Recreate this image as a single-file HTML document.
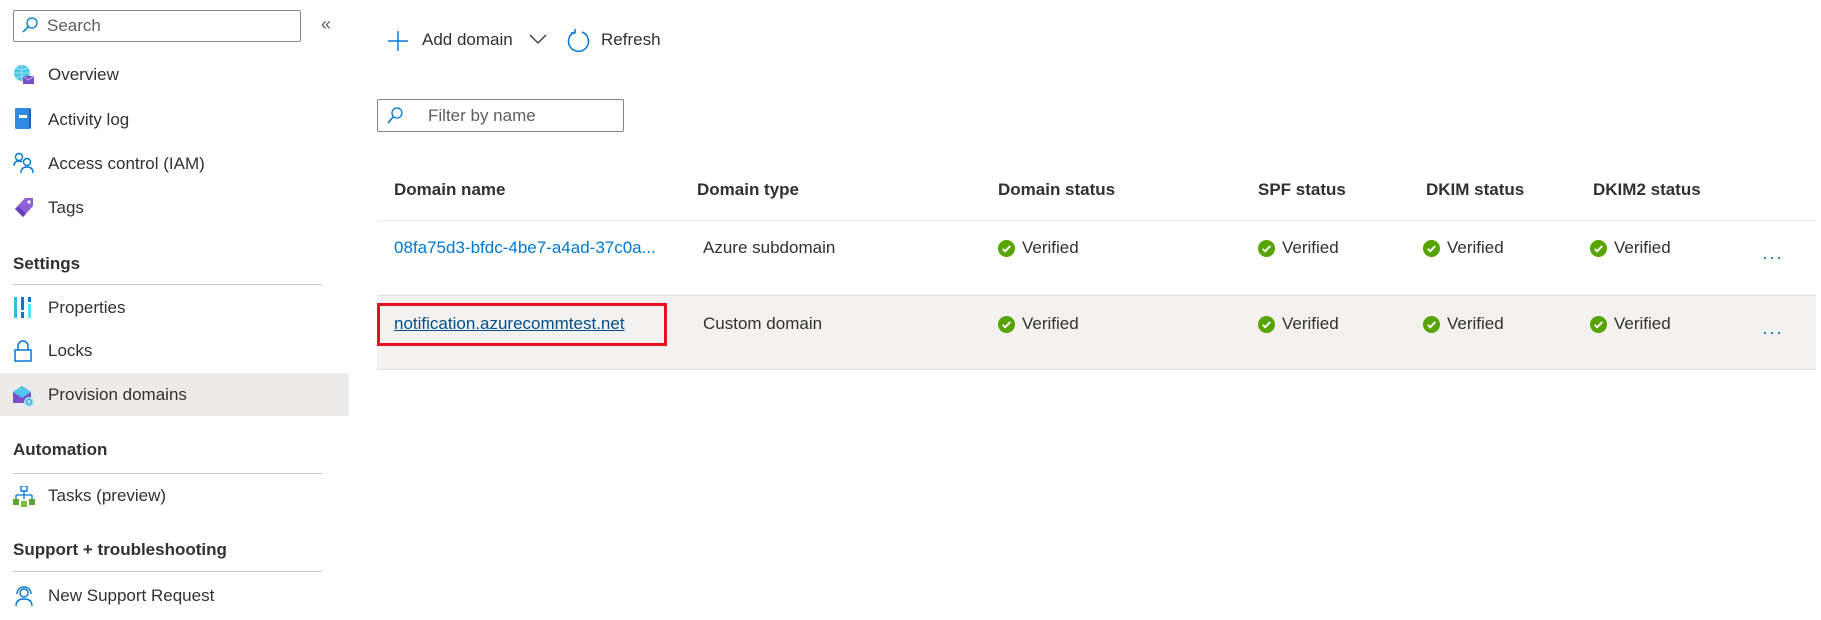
<!DOCTYPE html>
<html><head><meta charset="utf-8"><style>
*{margin:0;padding:0;box-sizing:border-box}
body{width:1821px;height:620px;background:#fff;font-family:"Liberation Sans",sans-serif;color:#323130;position:relative;overflow:hidden}
.a{position:absolute;white-space:nowrap}
.t{font-size:17px;line-height:20px}
.h{font-size:17px;font-weight:bold;color:#323130;line-height:20px}
.line{position:absolute;height:1px;background:#c8c6c4}
.v{position:absolute;font-size:17px;line-height:20px;color:#323130}
.v svg{position:absolute;left:-24px;top:2px}
.dots{position:absolute;color:#0078d4;font-size:18px;letter-spacing:1px}
</style></head><body>
<!-- sidebar -->
<div class="a" style="left:13px;top:10px;width:288px;height:32px;border:1px solid #8a8886;border-radius:2px"></div>
<svg class="a" style="left:21px;top:16px" width="18" height="18" viewBox="0 0 18 18"><circle cx="11" cy="7" r="5" fill="none" stroke="#0078d4" stroke-width="1.3"/><path d="M7.5 10.5L2 16" stroke="#0078d4" stroke-width="1.5"/></svg>
<div class="a t" style="left:47px;top:16px;color:#605e5c">Search</div>
<div class="a" style="left:321px;top:14px;font-size:18px;color:#605e5c">«</div>

<svg class="a" style="left:13px;top:64px" width="22" height="22" viewBox="0 0 22 22"><circle cx="9" cy="9" r="8" fill="#50c7e8"/><path d="M1 9h16M9 1v16M3 4q6 3 12 0M3 14q6-3 12 0" stroke="#9ee3f5" stroke-width="1" fill="none"/><rect x="10" y="12" width="11" height="8" fill="#7b4fc9"/><path d="M10 12l5.5 4 5.5-4" stroke="#c9b5f0" fill="none"/></svg>
<div class="a t" style="left:48px;top:65px">Overview</div>
<svg class="a" style="left:15px;top:108px" width="18" height="22" viewBox="0 0 18 22"><rect x="0" y="0" width="16" height="21" rx="1.5" fill="#2f8ae0"/><rect x="14" y="1" width="2" height="19" fill="#1d63b3"/><rect x="4" y="7" width="8" height="3" fill="#fff"/></svg>
<div class="a t" style="left:48px;top:110px">Activity log</div>
<svg class="a" style="left:13px;top:152px" width="22" height="22" viewBox="0 0 22 22" fill="none" stroke="#0078d4" stroke-width="1.4"><circle cx="6" cy="5" r="3.5"/><path d="M1 14q0-5 5-5q2 0 3 1"/><circle cx="14" cy="10" r="3.5"/><path d="M8 21q0-6 6-6t6 6"/></svg>
<div class="a t" style="left:48px;top:154px">Access control (IAM)</div>
<svg class="a" style="left:13px;top:197px" width="22" height="22" viewBox="0 0 22 22"><path d="M12 1h8v8L10 20 2 12z" fill="#8b5fd6"/><path d="M2 12l8 8 3-3-8-8z" fill="#6b3fbf"/><circle cx="16" cy="5" r="1.6" fill="#fff"/></svg>
<div class="a t" style="left:48px;top:198px">Tags</div>

<div class="a h" style="left:13px;top:254px">Settings</div>
<div class="line" style="left:13px;top:284px;width:309px"></div>
<svg class="a" style="left:14px;top:297px" width="20" height="22" viewBox="0 0 20 22"><rect x="0" y="0" width="3" height="21" fill="#32bedd"/><rect x="7" y="0" width="3" height="13" fill="#0078d4"/><rect x="7" y="15" width="3" height="6" fill="#0078d4"/><rect x="14" y="0" width="3" height="5" fill="#0078d4"/><rect x="14" y="7" width="3" height="14" fill="#50e6ff"/></svg>
<div class="a t" style="left:48px;top:298px">Properties</div>
<svg class="a" style="left:14px;top:340px" width="18" height="22" viewBox="0 0 18 22" fill="none" stroke="#0078d4" stroke-width="1.5"><path d="M4 10V6a5 5 0 0 1 10 0v4"/><rect x="1" y="10" width="16" height="11"/></svg>
<div class="a t" style="left:48px;top:341px">Locks</div>
<div class="a" style="left:0;top:373px;width:349px;height:43px;background:#edebe9"></div>
<svg class="a" style="left:12px;top:384px" width="24" height="24" viewBox="0 0 24 24"><path d="M1 8l9-6 9 6v11H1z" fill="#7b4fc9"/><path d="M1 8l9-6 9 6-9 6z" fill="#50c7e8"/><circle cx="17" cy="18" r="5" fill="#9ee3f5"/><circle cx="17" cy="18" r="2.5" fill="none" stroke="#2f8ae0"/></svg>
<div class="a t" style="left:48px;top:385px">Provision domains</div>

<div class="a h" style="left:13px;top:440px">Automation</div>
<div class="line" style="left:13px;top:473px;width:309px"></div>
<svg class="a" style="left:13px;top:486px" width="22" height="22" viewBox="0 0 22 22"><rect x="8" y="0" width="6" height="5" fill="none" stroke="#0078d4" stroke-width="1.4"/><path d="M11 5v4M3 9h16M3 9v4M11 9v4M19 9v4" stroke="#0078d4" stroke-width="1.3"/><rect x="0" y="13" width="6" height="6" fill="#5ea83a"/><rect x="8" y="15" width="6" height="6" fill="#7fc241"/><rect x="16" y="13" width="6" height="6" fill="#5ea83a"/></svg>
<div class="a t" style="left:48px;top:486px">Tasks (preview)</div>

<div class="a h" style="left:13px;top:540px">Support + troubleshooting</div>
<div class="line" style="left:13px;top:571px;width:309px"></div>
<svg class="a" style="left:14px;top:585px" width="20" height="22" viewBox="0 0 20 22" fill="none" stroke="#0078d4" stroke-width="1.4"><circle cx="10" cy="8" r="4"/><path d="M3 9a7 7 0 0 1 14 0"/><path d="M2 21q0-7 8-7t8 7"/></svg>
<div class="a t" style="left:48px;top:586px">New Support Request</div>

<!-- toolbar -->
<svg class="a" style="left:388px;top:31px" width="20" height="20" viewBox="0 0 20 20"><path d="M10 0v20M0 10h20" stroke="#0078d4" stroke-width="1.4"/></svg>
<div class="a t" style="left:422px;top:30px">Add domain</div>
<svg class="a" style="left:529px;top:33px" width="18" height="12" viewBox="0 0 18 12"><path d="M1 2l8 8 8-8" fill="none" stroke="#323130" stroke-width="1.3"/></svg>
<svg class="a" style="left:567px;top:28px" width="24" height="26" viewBox="0 0 24 26" fill="none" stroke="#0078d4" stroke-width="1.5"><path d="M8 4a10 10 0 1 0 7 0"/><path d="M8 1v4H4"/></svg>
<div class="a t" style="left:601px;top:30px">Refresh</div>

<div class="a" style="left:377px;top:99px;width:247px;height:33px;border:1px solid #8a8886;border-radius:2px"></div>
<svg class="a" style="left:386px;top:106px" width="18" height="19" viewBox="0 0 18 19"><circle cx="11" cy="7" r="5" fill="none" stroke="#0078d4" stroke-width="1.3"/><path d="M7.5 10.5L2 17" stroke="#0078d4" stroke-width="1.5"/></svg>
<div class="a t" style="left:428px;top:106px;color:#605e5c">Filter by name</div>

<!-- table -->
<div class="a h" style="left:394px;top:180px">Domain name</div>
<div class="a h" style="left:697px;top:180px">Domain type</div>
<div class="a h" style="left:998px;top:180px">Domain status</div>
<div class="a h" style="left:1258px;top:180px">SPF status</div>
<div class="a h" style="left:1426px;top:180px">DKIM status</div>
<div class="a h" style="left:1593px;top:180px">DKIM2 status</div>
<div class="line" style="left:377px;top:220px;width:1439px;background:#edebe9"></div>

<div class="a t" style="left:394px;top:238px;color:#0078d4">08fa75d3-bfdc-4be7-a4ad-37c0a...</div>
<div class="a t" style="left:703px;top:238px">Azure subdomain</div>
<div class="a" style="left:377px;top:295px;width:1439px;height:75px;background:#f3f2f1;border-top:1px solid #e1dfdd;border-bottom:1px solid #e1dfdd"></div>
<div class="a t" style="left:394px;top:314px;color:#004e8c;text-decoration:underline">notification.azurecommtest.net</div>
<div class="a" style="left:377px;top:303px;width:290px;height:43px;border:3px solid #e81123"></div>
<div class="a t" style="left:703px;top:314px">Custom domain</div>

<div id="vs"></div>
<div class="dots" style="left:1762px;top:247px">···</div>
<div class="dots" style="left:1762px;top:322px">···</div>
<script>
var xs=[1022,1282,1447,1614],ys=[238,314],h='';
var ic='<svg width="17" height="17" viewBox="0 0 16 16"><circle cx="8" cy="8" r="8" fill="#57a300"/><path d="M4.5 8.3l2.3 2.3 4.7-5" fill="none" stroke="#fff" stroke-width="1.8"/></svg>';
ys.forEach(function(y){xs.forEach(function(x){h+='<div class="v" style="left:'+x+'px;top:'+y+'px">'+ic+'Verified</div>';});});
document.getElementById('vs').innerHTML=h;
</script>
</body></html>
